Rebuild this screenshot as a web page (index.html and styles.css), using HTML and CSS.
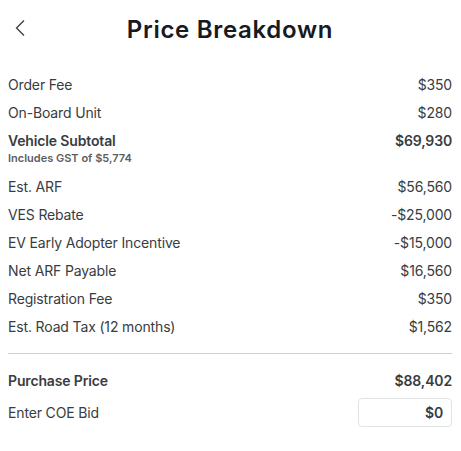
FILE: index.html
```html
<!DOCTYPE html>
<html>
<head>
<meta charset="utf-8">
<link rel="stylesheet" href="styles.css">
</head>
<body>
<div class="page">
  <header class="header">
    <span class="back">
      <svg width="12" height="18" viewBox="0 0 12 18"><path d="M10 1.5 L2.5 9 L10 16.5" fill="none" stroke="#393c41" stroke-width="1.3"/></svg>
    </span>
    <h1 class="title">Price Breakdown</h1>
  </header>
  <div class="list">
    <div class="row"><span>Order Fee</span><span>$350</span></div>
    <div class="row"><span>On-Board Unit</span><span>$280</span></div>
    <div class="subtotal">
      <div class="row-sub"><span class="strong">Vehicle Subtotal</span><span class="strong">$69,930</span></div>
      <div class="note">Includes GST of $5,774</div>
    </div>
    <div class="row"><span>Est. ARF</span><span>$56,560</span></div>
    <div class="row"><span>VES Rebate</span><span>-$25,000</span></div>
    <div class="row"><span>EV Early Adopter Incentive</span><span>-$15,000</span></div>
    <div class="row"><span>Net ARF Payable</span><span>$16,560</span></div>
    <div class="row"><span>Registration Fee</span><span>$350</span></div>
    <div class="row"><span>Est. Road Tax (12 months)</span><span>$1,562</span></div>
  </div>
  <hr class="divider">
  <div class="row total"><span class="strong">Purchase Price</span><span class="strong">$88,402</span></div>
  <div class="row bid"><span>Enter COE Bid</span><span class="input">$0</span></div>
</div>
</body>
</html>
```
FILE: styles.css
```css
* { box-sizing: border-box; }
body {
  margin: 0;
  font-family: Inter, "Noto Sans", sans-serif;
  color: #393c41;
  background: #fff;
}
.page { padding: 0 9px 0 8px; }
.header {
  height: 58px;
  display: flex;
  align-items: center;
  justify-content: center;
  position: relative;
}
.back {
  position: absolute;
  left: 6px;
  top: 19px;
  display: flex;
}
.title {
  margin: 0;
  font-size: 24px;
  font-weight: 600;
  color: #171a20;
  letter-spacing: 0.7px;
}
.list { margin-top: 12px; }
.row {
  display: flex;
  justify-content: space-between;
  align-items: center;
  height: 28px;
  font-size: 14px;
  letter-spacing: -0.15px;
}
.subtotal { padding: 4px 0 6px; }
.row-sub {
  display: flex;
  justify-content: space-between;
  align-items: center;
  height: 20px;
  font-size: 14px;
  letter-spacing: -0.15px;
}
.strong { font-weight: 600; }
.note {
  font-size: 11px;
  font-weight: 600;
  line-height: 16px;
  color: #5c5e62;
}
.divider {
  margin: 13px 0 12px;
  border: 0;
  border-top: 1px solid #d0d1d2;
}
.bid { margin-top: 4px; height: 29px; }
.input {
  width: 94px;
  height: 29px;
  border: 1px solid #e2e3e3;
  border-radius: 4px;
  display: flex;
  align-items: center;
  justify-content: flex-end;
  padding-right: 8px;
  font-weight: 600;
}
```
